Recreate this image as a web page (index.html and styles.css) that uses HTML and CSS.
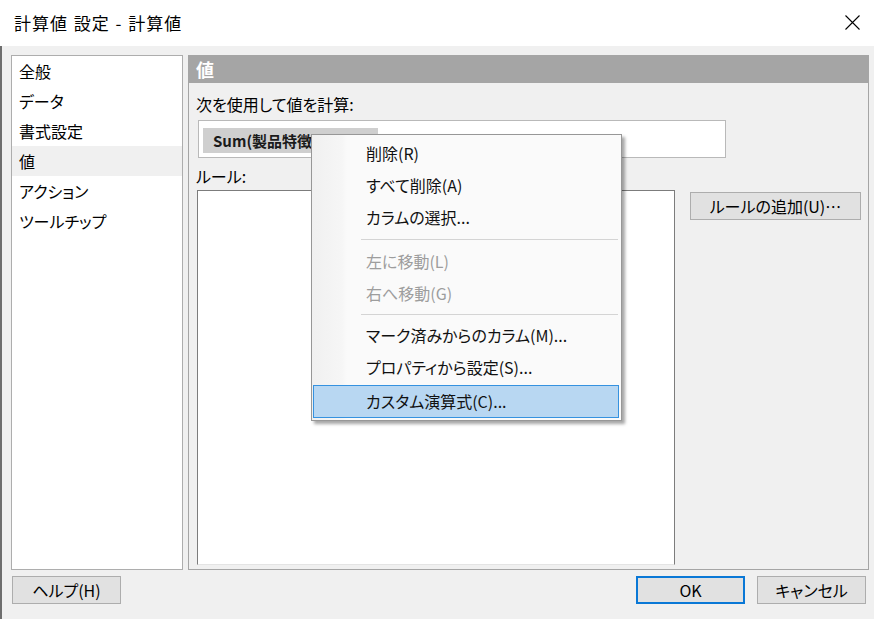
FILE: index.html
```html
<!DOCTYPE html>
<html lang="ja">
<head>
<meta charset="utf-8">
<title>計算値 設定 - 計算値</title>
<link rel="stylesheet" href="styles.css">
</head>
<body>
<div class="window">
  <div class="titlebar">
    <span class="title">計算値 設定 - 計算値</span>
    <svg class="close" width="15" height="15" viewBox="0 0 15 15"><path d="M0.5 0.5 L14.5 14.5 M14.5 0.5 L0.5 14.5" stroke="#000" stroke-width="1.1" fill="none"/></svg>
  </div>
  <div class="client">
    <div class="main">
      <ul class="nav">
        <li class="nav-item">全般</li>
        <li class="nav-item">データ</li>
        <li class="nav-item">書式設定</li>
        <li class="nav-item is-selected">値</li>
        <li class="nav-item">アクション</li>
        <li class="nav-item">ツールチップ</li>
      </ul>
      <div class="panel">
        <div class="panel-head">値</div>
        <div class="panel-body">
          <div class="label">次を使用して値を計算:</div>
          <div class="field"><span class="chip">Sum(製品特徴) の合計</span></div>
          <div class="label label-rules">ルール:</div>
          <div class="rules-row">
            <div class="rules-list"></div>
            <button class="btn btn-add">ルールの追加(U)…</button>
          </div>
        </div>
      </div>
    </div>
    <div class="footer">
      <button class="btn">ヘルプ(H)</button>
      <span class="spacer"></span>
      <button class="btn btn-ok">OK</button>
      <button class="btn">キャンセル</button>
    </div>
  </div>
  <div class="menu">
    <div class="menu-item">削除(R)</div>
    <div class="menu-item">すべて削除(A)</div>
    <div class="menu-item">カラムの選択...</div>
    <div class="menu-sep"></div>
    <div class="menu-item is-disabled">左に移動(L)</div>
    <div class="menu-item is-disabled">右へ移動(G)</div>
    <div class="menu-sep"></div>
    <div class="menu-item">マーク済みからのカラム(M)...</div>
    <div class="menu-item">プロパティから設定(S)...</div>
    <div class="menu-item is-active">カスタム演算式(C)...</div>
  </div>
</div>
</body>
</html>
```
FILE: styles.css
```css
* { box-sizing: border-box; }
html, body { margin: 0; padding: 0; }
body {
  font-family: "Noto Sans CJK JP", "Noto Sans", sans-serif;
  font-size: 16px;
  font-feature-settings: "palt";
  color: #000;
  background: #f0f0f0;
}
.window {
  position: relative;
  width: 874px;
  height: 619px;
  overflow: hidden;
  background: #f0f0f0;
}
.titlebar {
  height: 46px;
  background: #fff;
  display: flex;
  align-items: center;
  justify-content: space-between;
  padding: 0 14px 1px 14px;
}
.title {
  font-size: 17px;
  line-height: 20px;
  letter-spacing: 1px;
  color: #000;
  font-feature-settings: normal;
  word-spacing: 1px;
}
.close { display: block; }
.client {
  height: 573px;
  border-left: 2px solid #6e6e6e;
  display: flex;
  flex-direction: column;
}
.main {
  display: flex;
  gap: 5px;
  padding: 9px 0 0 9px;
  height: 524px;
}
.nav {
  list-style: none;
  margin: 0;
  padding: 0;
  width: 172px;
  height: 515px;
  background: #fff;
  border: 1px solid #adadad;
}
.nav-item {
  height: 30px;
  line-height: 30px;
  padding-left: 7px;
  font-size: 16px;
}
.nav-item.is-selected { background: #f0f0f0; }
.panel {
  width: 681px;
  height: 515px;
  border: 1px solid #a5a5a5;
  display: flex;
  flex-direction: column;
}
.panel-head {
  height: 27px;
  background: #a5a5a5;
  color: #fff;
  font-weight: bold;
  font-size: 18px;
  line-height: 26px;
  padding-left: 7px;
}
.panel-body {
  flex: 1;
  display: flex;
  flex-direction: column;
  padding: 11px 7px 4px 7px;
}
.label { line-height: 20px; height: 20px; font-size: 16px; }
.label-rules { margin-top: 8px; }
.field {
  margin: 6px 0 0 2px;
  width: 528px;
  height: 38px;
  background: #fff;
  border: 1px solid #b9b9b9;
  padding: 7px 0 0 4px;
}
.chip {
  display: block;
  width: 175px;
  height: 25px;
  background: #cfcfcf;
  font-weight: bold;
  font-size: 15px;
  line-height: 25px;
  padding-left: 10px;
  white-space: nowrap;
  overflow: hidden;
  color: #1a1a1a;
}
.rules-row {
  flex: 1;
  margin-top: 4px;
  display: flex;
  align-items: flex-start;
  gap: 15px;
}
.rules-list {
  margin-left: 1px;
  width: 478px;
  height: 375px;
  background: #fff;
  border: 1px solid #7c7c7c;
  border-bottom-color: #e4e4e4;
}
.btn {
  font-family: inherit;
  font-feature-settings: "palt";
  font-size: 16px;
  height: 28px;
  width: 109px;
  padding: 0;
  line-height: 24px;
  background: #e1e1e1;
  border: 1px solid #adadad;
  color: #000;
}
.btn-add { width: 171px; margin-top: 2px; }
.btn-ok { border: 2px solid #0a78d6; }
.footer {
  display: flex;
  gap: 12px;
  padding: 6px 8px 0 10px;
}
.spacer { flex: 1; }
.menu {
  position: absolute;
  left: 311px;
  top: 134px;
  width: 311px;
  height: 287px;
  background: linear-gradient(to right, #f0f0f0 0, #f6f6f6 30px, #fafafa 35px, #fafafa 100%);
  border: 1px solid #979797;
  padding: 2px 2px 2px 1px;
  box-shadow: 3px 3px 3px rgba(0,0,0,0.35);
}
.menu-item {
  height: 32px;
  line-height: 32px;
  padding-left: 53px;
  font-size: 16px;
  color: #111;
  white-space: nowrap;
}
.menu-item.is-disabled { color: #9d9d9d; }
.menu-item.is-active {
  margin-top: 2px;
  height: 33px;
  line-height: 31px;
  background: #b8d7f2;
  border: 1px solid #3592e0;
  padding-left: 52px;
}
.menu-sep {
  height: 12px;
  margin-left: 48px;
  position: relative;
}
.menu-sep::after {
  content: "";
  position: absolute;
  left: 0;
  right: 1px;
  top: 6px;
  height: 1px;
  background: #d4d4d4;
}
.menu-sep + .menu-item + .menu-item + .menu-sep { height: 10px; }
.menu-sep + .menu-item + .menu-item + .menu-sep::after { top: 5px; }
```
